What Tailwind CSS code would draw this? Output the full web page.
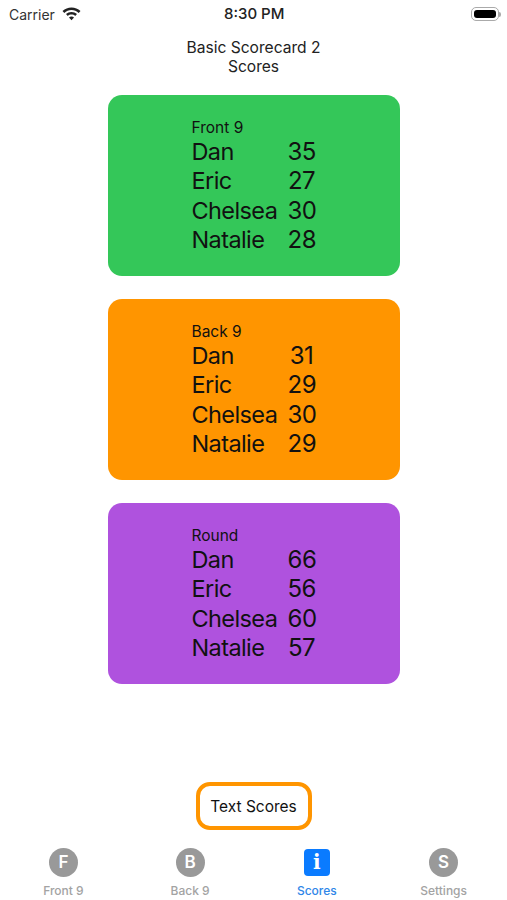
<!DOCTYPE html>
<html lang="en">
<head>
    <meta charset="UTF-8">
    <meta name="viewport" content="width=device-width, initial-scale=1.0">
    <title>Basic Scorecard 2</title>
    <script src="https://cdn.jsdelivr.net/npm/@tailwindcss/browser@4"></script>
</head>
<body class="bg-white font-['Inter','Liberation_Sans',sans-serif] text-[#111] w-[507px] overflow-hidden">

    <!-- Status bar -->
    <div class="h-[28px] pl-[9px] pr-[6px] flex items-center justify-between relative text-[14px] text-[#333]">
        <div class="flex items-center gap-[7px]">
            <span>Carrier</span>
            <svg class="w-[19px] h-[14px]" viewBox="0 0 19 14" fill="#222">
                <path d="M9.5 0.5C6 0.5 3 1.8 0.5 4.1L2.3 6C4.3 4.2 6.8 3.1 9.5 3.1s5.200 1.100 7.200 2.900L18.500 4.100C16 1.800 13 .5 9.500 .5z"/>
                <path d="M9.500 5C7.400 5 5.500 5.800 4 7.100l1.800 1.900c1-.9 2.300-1.400 3.700-1.400s2.700.5 3.700 1.400L15 7.100C13.500 5.800 11.600 5 9.500 5z"/>
                <path d="M9.500 9.500c-1 0-1.800.4-2.500 1l2.500 2.800 2.500-2.800c-.7-.6-1.500-1-2.500-1z"/>
            </svg>
        </div>
        <span class="absolute left-[224px] text-[15px] font-medium text-[#222]">8:30 PM</span>
        <div class="flex items-center">
            <div class="w-[28px] h-[14px] rounded-[5px] border border-[#aaa] p-[2px]">
                <div class="w-full h-full rounded-[3px] bg-black"></div>
            </div>
            <div class="w-[2px] h-[5px] bg-[#aaa] rounded-r-sm"></div>
        </div>
    </div>

    <!-- Title -->
    <div class="mt-[10px] text-center text-[15.600px] leading-[19px] text-[#222]">
        <p>Basic Scorecard 2</p>
        <p>Scores</p>
    </div>

    <!-- Score cards -->
    <div class="mt-[19px] flex flex-col items-center gap-[23px]">
        <div class="w-[292px] h-[181px] rounded-[14px] bg-[#34c759] pl-[84px] pt-[24px]">
            <p class="text-[15.500px] leading-[18px]">Front 9</p>
            <div class="grid grid-cols-[96px_28px] text-[24px] tracking-[-0.5px] leading-[29.300px]">
                <span class="text-[23.500px] tracking-[-0.6px]">Dan</span><span class="text-center">35</span>
                <span class="text-[23.500px] tracking-[-0.6px]">Eric</span><span class="text-center">27</span>
                <span class="text-[23.500px] tracking-[-0.6px]">Chelsea</span><span class="text-center">30</span>
                <span class="text-[23.500px] tracking-[-0.6px]">Natalie</span><span class="text-center">28</span>
            </div>
        </div>
        <div class="w-[292px] h-[181px] rounded-[14px] bg-[#ff9500] pl-[84px] pt-[24px]">
            <p class="text-[15.500px] leading-[18px]">Back 9</p>
            <div class="grid grid-cols-[96px_28px] text-[24px] tracking-[-0.5px] leading-[29.300px]">
                <span class="text-[23.500px] tracking-[-0.6px]">Dan</span><span class="text-center">31</span>
                <span class="text-[23.500px] tracking-[-0.6px]">Eric</span><span class="text-center">29</span>
                <span class="text-[23.500px] tracking-[-0.6px]">Chelsea</span><span class="text-center">30</span>
                <span class="text-[23.500px] tracking-[-0.6px]">Natalie</span><span class="text-center">29</span>
            </div>
        </div>
        <div class="w-[292px] h-[181px] rounded-[14px] bg-[#af52de] pl-[84px] pt-[24px]">
            <p class="text-[15.500px] leading-[18px]">Round</p>
            <div class="grid grid-cols-[96px_28px] text-[24px] tracking-[-0.5px] leading-[29.300px]">
                <span class="text-[23.500px] tracking-[-0.6px]">Dan</span><span class="text-center">66</span>
                <span class="text-[23.500px] tracking-[-0.6px]">Eric</span><span class="text-center">56</span>
                <span class="text-[23.500px] tracking-[-0.6px]">Chelsea</span><span class="text-center">60</span>
                <span class="text-[23.500px] tracking-[-0.6px]">Natalie</span><span class="text-center">57</span>
            </div>
        </div>
    </div>

    <!-- Button -->
    <div class="mt-[98px] flex justify-center">
        <button class="w-[116px] h-[48px] pt-[1px] rounded-[14px] border-[4px] border-[#ff9500] text-[15.500px] text-[#111]">Text Scores</button>
    </div>

    <!-- Tab bar -->
    <div class="mt-[18px] grid grid-cols-4 text-[12px] leading-[15px] text-[#a3a3a3] font-medium">
        <div class="flex flex-col items-center gap-[6px]">
            <div class="w-[29px] h-[29px] rounded-full bg-[#999] text-white text-[17px] font-semibold flex items-center justify-center">F</div>
            <span>Front 9</span>
        </div>
        <div class="flex flex-col items-center gap-[6px]">
            <div class="w-[29px] h-[29px] rounded-full bg-[#999] text-white text-[17px] font-semibold flex items-center justify-center">B</div>
            <span>Back 9</span>
        </div>
        <div class="flex flex-col items-center gap-[6px] text-[#2f86e8]">
            <div class="w-[26px] h-[27px] my-[1px] rounded-[4px] bg-[#0a7bff] text-white text-[20px] font-bold font-['DejaVu_Serif',serif] flex items-center justify-center">i</div>
            <span>Scores</span>
        </div>
        <div class="flex flex-col items-center gap-[6px]">
            <div class="w-[29px] h-[29px] rounded-full bg-[#999] text-white text-[17px] font-semibold flex items-center justify-center">S</div>
            <span>Settings</span>
        </div>
    </div>

</body>
</html>
